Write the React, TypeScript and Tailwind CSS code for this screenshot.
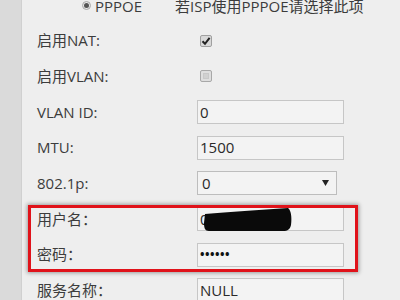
import React from "react";

const font = { fontFamily: '"Open Sans", "Noto Sans CJK SC", sans-serif' };

function Row({ label, children }: { label: React.ReactNode; children?: React.ReactNode }) {
  return (
    <div className="flex h-[35.7px] items-center">
      <div className="w-[160px] shrink-0 text-[15px] text-[#3c3c3c]">{label}</div>
      <div className="flex items-center">{children}</div>
    </div>
  );
}

function Box({ children, w = "w-[147px]" }: { children?: React.ReactNode; w?: string }) {
  return (
    <div className={`${w} h-[24px] border border-[#c6c6c6] bg-[#f3f3f3] flex items-center pl-[2px] text-[15px] text-[#2a2a2a]`}>
      {children}
    </div>
  );
}

export default function App() {
  return (
    <div className="relative flex h-[300px] w-[400px] overflow-hidden bg-[#ececec]" style={font}>
      <div className="w-[22px] shrink-0 bg-[#dadada] border-r border-[#d0d0d0]" />
      <div className="flex-1 bg-[#eeeeee] pl-[15px]">
        <div className="mt-[-12px] flex flex-col">
          <div className="flex h-[35.7px] items-center text-[15px] text-[#3c3c3c]">
            <div className="ml-[45px] h-[9px] w-[9px] rounded-full border border-[#a8a8a8] bg-[#e8e8e8] flex items-center justify-center">
              <div className="h-[5px] w-[5px] rounded-full bg-[#555]" />
            </div>
            <span className="ml-[4px]">PPPOE</span>
            <span className="ml-[33px]">若ISP使用PPPOE请选择此项</span>
          </div>
          <div className="mt-[-1px]" />
          <Row label="启用NAT:">
            <div className="ml-[3px] h-[12px] w-[12px] rounded-[2px] border border-[#a0a0a0] bg-[#d8d8d8] flex items-center justify-center">
              <svg width="10" height="10" viewBox="0 0 10 10">
                <path d="M1.5 5.2 L4 7.8 L8.6 1.8" stroke="#222" strokeWidth="2" fill="none" />
              </svg>
            </div>
          </Row>
          <Row label="启用VLAN:">
            <div className="ml-[3px] h-[12px] w-[12px] rounded-[2px] border border-[#a8a8a8] bg-[#dedede] flex items-center justify-center">
              <div className="h-[6px] w-[6px] bg-[#d0d0d0] border border-[#c8c8c8]" />
            </div>
          </Row>
          <Row label="VLAN ID:">
            <Box>0</Box>
          </Row>
          <Row label="MTU:">
            <Box>1500</Box>
          </Row>
          <Row label="802.1p:">
            <div className="w-[140px] h-[24px] border border-[#bdbdbd] bg-[#f3f3f3] flex items-center justify-between pl-[4px] pr-[7px] text-[15px] text-[#2a2a2a]">
              <span>0</span>
              <svg width="7" height="6" viewBox="0 0 7 6">
                <path d="M0 0 H7 L3.5 6 Z" fill="#222" />
              </svg>
            </div>
          </Row>
          <Row label="用户名：">
            <div className="relative">
              <Box>0</Box>
              <svg className="absolute left-0 top-0" width="147" height="26" viewBox="0 0 147 26">
                <path
                  d="M8 7 C32 5 62 3 91 1 C94 3 95 10 94 18 C93 22 91 24 86 24 L12 24 C8 24 7 21 7 16 Z"
                  fill="#0a0a0a"
                />
              </svg>
            </div>
          </Row>
          <Row label="密码：">
            <Box>
              <span className="text-[12px] font-bold tracking-[0.5px] text-[#111]">••••••</span>
            </Box>
          </Row>
          <Row label="服务名称：">
            <Box>NULL</Box>
          </Row>
        </div>
      </div>
      <div className="absolute left-[28px] top-[205px] h-[67px] w-[330px] border-[3px] border-[#e0121a] shadow-[0_0_4px_1px_rgba(0,0,0,0.35)]" />
    </div>
  );
}
